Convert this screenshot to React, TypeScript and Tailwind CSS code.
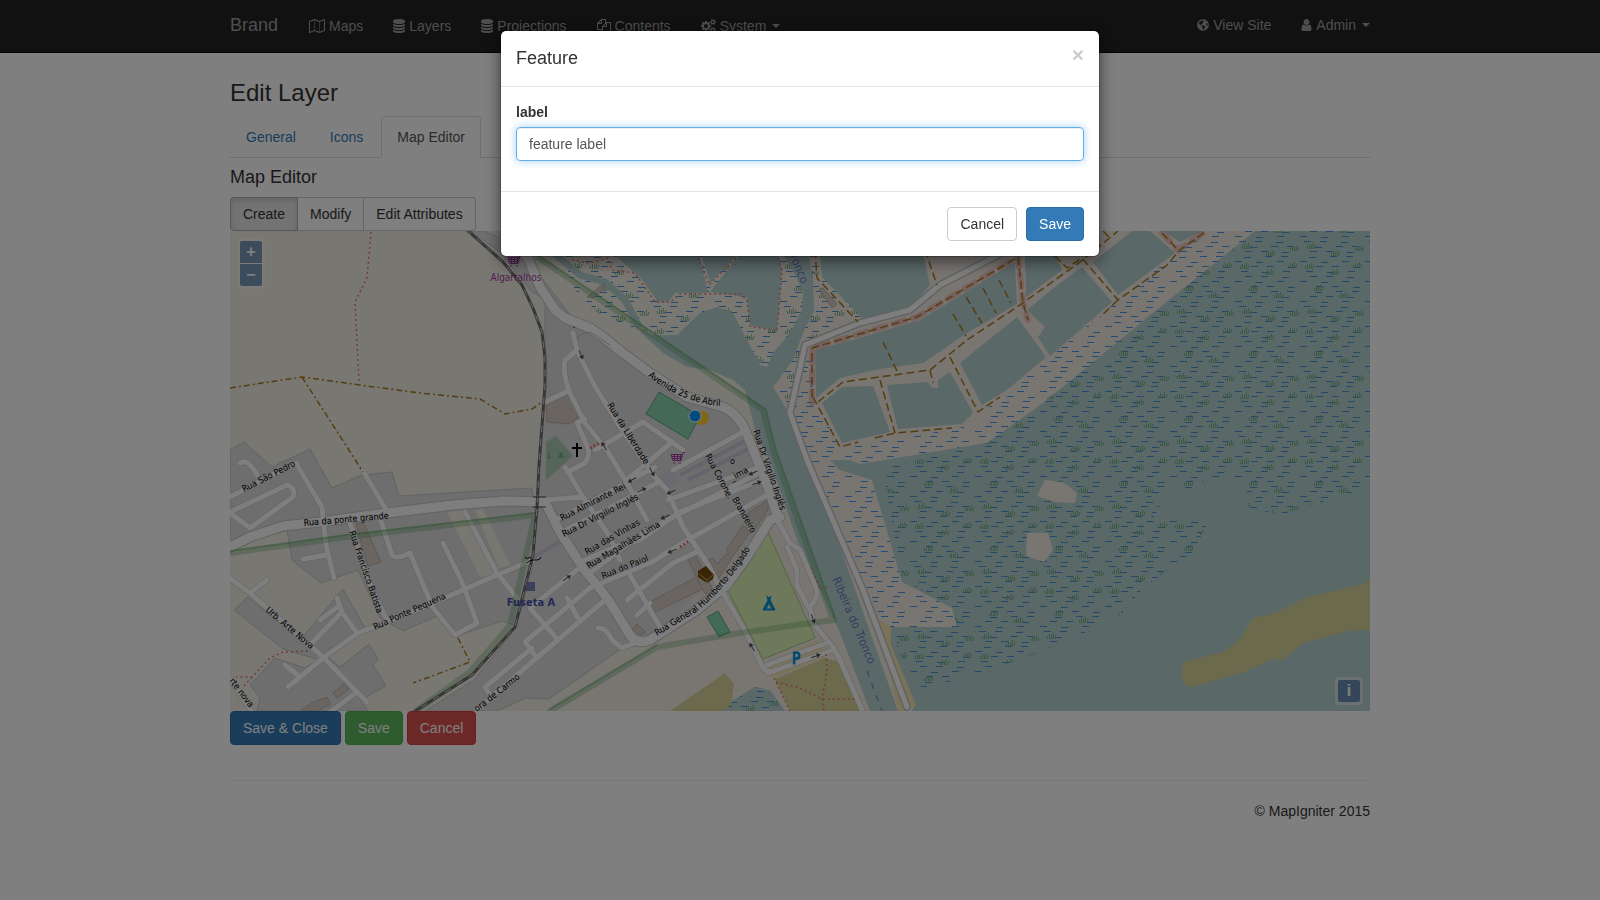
import React from 'react';
import { FaGlobeAmericas } from 'react-icons/fa';

interface IconProps {
  viewBox: string;
  d: string;
  className: string;
}

const Icon: React.FC<IconProps> = ({ viewBox, d, className }) => (
  <svg viewBox={viewBox} className={className} fill="currentColor" aria-hidden="true">
    <path d={d} />
  </svg>
);

const MAP_PATH = 'M2020 11q28 20 28 53v1408q0 20-11 36t-29 23l-640 256q-24 11-48 0l-616-246-616 246q-10 5-24 5-19 0-36-11-28-20-28-53V320q0-20 11-36t29-23L680 5q24-11 48 0l616 246L1960 5q32-13 60 6zM736 146v1270l576 230V376zM128 363v1270l544-217V146zm1792 1066V159l-544 217v1270z';
const DATABASE_PATH = 'M768 768q237 0 443-43t325-127v170q0 69-103 128t-280 93.5-385 34.5-385-34.5-280-93.5-103-128v-170q119 84 325 127t443 43zm0 768q237 0 443-43t325-127v170q0 69-103 128t-280 93.5-385 34.5-385-34.5-280-93.5-103-128v-170q119 84 325 127t443 43zm0-384q237 0 443-43t325-127v170q0 69-103 128t-280 93.5-385 34.5-385-34.5-280-93.5-103-128v-170q119 84 325 127t443 43zm0-1152q208 0 385 34.5t280 93.5 103 128v128q0 69-103 128t-280 93.5-385 34.5-385-34.5-280-93.5-103-128v-128q0-69 103-128t280-93.5 385-34.5z';
const FILES_PATH = 'M1696 384q40 0 68 28t28 68v1216q0 40-28 68t-68 28h-960q-40 0-68-28t-28-68v-288h-544q-40 0-68-28t-28-68v-672q0-40 20-88t48-76l408-408q28-28 76-48t88-20h416q40 0 68 28t28 68v328q68-40 128-40h416zm-544 213l-299 299h299v-299zm-640-384l-299 299h299v-299zm196 647l316-316v-416h-384v416q0 40-28 68t-68 28h-416v640h512v-256q0-40 20-88t48-76zm956 804v-1152h-384v416q0 40-28 68t-68 28h-416v640h896z';
const COGS_PATH = 'M896 896q0-106-75-181t-181-75-181 75-75 181 75 181 181 75 181-75 75-181zm768 512q0-52-38-90t-90-38-90 38-38 90q0 53 37.5 90.5t90.5 37.5 90.5-37.5 37.5-90.5zm0-1024q0-52-38-90t-90-38-90 38-38 90q0 53 37.5 90.5t90.5 37.5 90.5-37.5 37.5-90.5zm-384 421v185q0 10-7 19.5t-16 10.5l-155 24q-11 35-32 76 34 48 90 115 7 11 7 20 0 12-7 19-23 30-82.5 89.5t-78.5 59.5q-11 0-21-7l-115-90q-37 19-77 31-11 108-23 155-7 24-30 24h-186q-11 0-20-7.5t-10-17.5l-23-153q-34-10-75-31l-118 89q-7 7-20 7-11 0-21-8-144-133-144-160 0-9 7-19 10-14 41-53t47-61q-23-44-35-82l-152-24q-10-1-17-9.5t-7-19.5v-185q0-10 7-19.5t16-10.5l155-24q11-35 32-76-34-48-90-115-7-11-7-20 0-12 7-20 22-30 82-89t79-59q11 0 21 7l115 90q34-18 77-32 11-108 23-154 7-24 30-24h186q11 0 20 7.5t10 17.5l23 153q34 10 75 31l118-89q8-7 20-7 11 0 21 8 144 133 144 160 0 8-7 19-12 16-42 54t-45 60q23 48 34 82l152 23q10 2 17 10.5t7 19.5zm640 533v140q0 16-149 31-12 27-30 52 51 113 51 138 0 4-4 7-122 71-124 71-8 0-46-47t-52-68q-20 2-30 2t-30-2q-14 21-52 68t-46 47q-2 0-124-71-4-3-4-7 0-25 51-138-18-25-30-52-149-15-149-31v-140q0-16 149-31 13-29 30-52-51-113-51-138 0-4 4-7 4-2 35-20t59-34 30-16q8 0 46 46.5t52 67.5q20-2 30-2t30 2q51-71 92-112l6-2q4 0 124 70 4 3 4 7 0 25-51 138 17 23 30 52 149 15 149 31zm0-1024v140q0 16-149 31-12 27-30 52 51 113 51 138 0 4-4 7-122 71-124 71-8 0-46-47t-52-68q-20 2-30 2t-30-2q-14 21-52 68t-46 47q-2 0-124-71-4-3-4-7 0-25 51-138-18-25-30-52-149-15-149-31v-140q0-16 149-31 13-29 30-52-51-113-51-138 0-4 4-7 4-2 35-20t59-34 30-16q8 0 46 46.5t52 67.5q20-2 30-2t30 2q51-71 92-112l6-2q4 0 124 70 4 3 4 7 0 25-51 138 17 23 30 52 149 15 149 31z';
const USER_PATH = 'M1536 1399q0 109-62.5 187t-150.5 78h-854q-88 0-150.5-78t-62.5-187q0-85 8.5-160.5t31.5-152 58.5-131 94-89 134.5-34.5q131 128 313 128t313-128q76 0 134.5 34.5t94 89 58.5 131 31.5 152 8.5 160.5zm-256-887q0 159-112.5 271.5t-271.5 112.5-271.5-112.5-112.5-271.5 112.5-271.5 271.5-112.5 271.5 112.5 112.5 271.5z';

const Caret = () => (
  <span className="ml-0.5 size-0 border-x-4 border-t-4 border-x-transparent border-t-current" />
);

const Navbar = () => (
  <nav className="border-b border-[#080808] bg-[#222] text-[#9d9d9d]">
    <div className="mx-auto flex max-w-[1140px] items-start justify-between">
      <div className="flex items-start">
        <a href="#brand" className="py-[15px] pr-4 text-lg leading-5">Brand</a>
        <ul className="flex">
          <li>
            <a href="#maps" className="flex items-center gap-1 px-[15px] py-4">
              <Icon viewBox="0 0 2048 1792" d={MAP_PATH} className="h-3.5 w-4" />
              Maps
            </a>
          </li>
          <li>
            <a href="#layers" className="flex items-center gap-1 px-[15px] py-4">
              <Icon viewBox="0 0 1536 1792" d={DATABASE_PATH} className="h-3.5 w-3" />
              Layers
            </a>
          </li>
          <li>
            <a href="#projections" className="flex items-center gap-1 px-[15px] py-4">
              <Icon viewBox="0 0 1536 1792" d={DATABASE_PATH} className="h-3.5 w-3" />
              Projections
            </a>
          </li>
          <li>
            <a href="#contents" className="flex items-center gap-1 px-[15px] py-4">
              <Icon viewBox="0 0 1792 1792" d={FILES_PATH} className="size-3.5" />
              Contents
            </a>
          </li>
          <li>
            <a href="#system" className="flex items-center gap-1 px-[15px] py-4">
              <Icon viewBox="0 0 1920 1792" d={COGS_PATH} className="h-3.5 w-[15px]" />
              System
              <Caret />
            </a>
          </li>
        </ul>
      </div>
      <ul className="flex">
        <li>
          <a href="#site" className="flex items-center gap-1 px-[15px] py-[15px]">
            <FaGlobeAmericas className="size-3" />
            View Site
          </a>
        </li>
        <li>
          <a href="#admin" className="flex items-center gap-1 py-[15px] pl-[15px]">
            <Icon viewBox="256 128 1280 1536" d={USER_PATH} className="h-3 w-[11px]" />
            Admin
            <Caret />
          </a>
        </li>
      </ul>
    </div>
  </nav>
);

// marsh hatching, one 65x65 tile
const MARSH_DASHES = Array.from({ length: 13 }, (_, row) =>
  [0, 1, 2].map(i => `M${(row * 28 + i * 21 + (row % 3) * 4) % 58} ${row * 5 + 1.5 + (i % 2)}h7`).join('')
).join('');

const TUFT = 'm-3 -3l1 3m1.5 -5v5m2 -4v4m2 -6l-.5 6m3 -4l-1.5 4';
const TUFTS = [[8, 9], [33, 15], [56, 8], [17, 31], [42, 38], [58, 56], [10, 54], [34, 61]]
  .map(([x, y]) => `M${x} ${y}${TUFT}`).join('');

const ROADS = [
  'M573 333L577 350 593 383 620 427 655 477 667 490 683 527 707 563 723 593 743 627 761 664Q765 674 774 671',
  'M577 350L565 360Q562 373 570 393L585 423 607 450 627 483 647 520',
  'M585 419L577 423 588 448Q590 456 585 463L568 472',
  'M565 467L583 497 610 537 620 560',
  'M595 450L643 422 683 450M672 442L627 480',
  'M545 402L568 391',
  'M743 432L673 470',
  'M757 468L668 500M655 467L613 490 556 520M657 483L560 533',
  'M762 480L680 512 640 540 620 545 580 562',
  'M767 495L693 537 650 563 590 588',
  'M757 474L673 517 640 535 590 573',
  'M583 497L545 500',
  'M697 552L673 563 627 600M630 575L660 627M637 615L650 603',
  'M577 570L530 608 558 640',
  'M590 588L525 642 537 658',
  'M605 600L540 655 477 710',
  'M532 648L485 687 490 695M567 598L578 618',
  'M598 628Q606 627 612 640L622 648 635 643',
  'M777 520L790 543 800 550 817 590Q818 598 810 607L813 623 833 647 840 660 863 712',
  'M787 547L797 570 797 585 808 607',
  'M829 642L767 665M833 650L768 673',
  'M297 465L322 507 326 545 334 578M303 559L327 555',
  'M363 471L387 511',
  'M380 518L392 555Q396 560 410 553L433 608 455 635 477 623 462 582 443 543',
  'M350 523L372 590 387 620',
  'M465 512L497 573 517 598',
  'M300 677L323 658 358 633 387 622 433 603 497 575 533 560',
  'M228 577L250 593 323 657 367 702M250 593L267 580',
  'M310 645L342 612 337 598M342 612L357 633M320 620L339 606',
  'M285 665L300 677 288 687',
  'M330 712L357 692',
  'M228 676L252 712',
  'M228 498L270 476 297 463',
  'M240 463Q248 458 257 475',
  'M228 513L287 485Q296 488 293 497L250 528 230 513',
];

const MAIN_ROADS = [
  'M228 548L250 537 283 526 320 522 387 513 453 505 503 501 545 502 560 532 583 568 607 598 627 630Q634 646 650 640L697 610 727 585 747 557 770 520 780 517',
  'M498 225L528 258 540 287 555 310 565 318 590 328 603 337 623 353 650 373 687 397 723 407Q740 414 748 437L760 467 767 485 778 517',
];

const DIKE = 'M907 707L863 590 807 460 790 413 805 345 860 323 910 310 940 285 1000 254';

const WATER = [
  // creek and river
  '635,327 653,335 677,335 700,313 717,307 733,313 747,340 760,365 767,367 773,353 790,333 802,310 803,293 793,270 780,250 808,250 813,280 814,310 803,333 793,360 773,387 787,410 800,445 820,490 898,711 870,711 840,633 797,540 770,460 757,437 750,410 745,390 733,380 710,370 687,367 663,353',
  // fish ponds
  '610,250 698,250 708,293 675,293 668,302 658,302 640,277 627,266',
  '700,250 742,250 710,283',
  '743,250 777,250 782,270 777,331 750,325 747,297 710,292',
  '820,250 922,250 930,285 912,305 880,315 862,318 822,277',
  '815,350 863,337 920,320 953,300 1015,262 1017,304 967,333 923,363 880,369 840,378 816,398',
  '822,403 842,387 873,386 890,432 842,443',
  '887,385 928,382 932,388 938,388 938,380 950,372 973,413 962,424 898,429',
  '960,363 1017,317 1046,357 1007,390 982,405',
  '1027,310 1060,283 1082,267 1112,302 1050,356 1038,337 1045,327',
  '1093,262 1132,231 1150,231 1175,253 1118,295',
  '1163,231 1203,231 1180,242',
  '1025,250 1053,250 1062,270 1026,297',
  // lagoon
  '1255,231 1160,307 1080,373 1040,405 987,443 860,464 850,460 830,460 840,470 872,480 902,582 952,608 957,627 891,627 891,645 915,705 912,711 1370,711 1370,231',
];

const RESIDENTIAL = [
  '545,300 545,380 542,430 536,520 532,570 516,628 474,680 425,711 497,711 526,698 549,699 622,648 645,645 752,562 777,505 765,470 750,430 735,412 700,403 645,365 600,330 570,315 530,262 500,238 484,231 470,231 500,252 530,290',
  '230,450 244,442 272,467 310,449 332,488 362,475 392,472 399,496 532,488 536,520 532,560 514,625 502,621 457,636 437,616 403,631 380,618 358,570 321,583 292,560 287,530 230,546',
  '234,610 248,597 300,640 343,589 365,628 330,650 320,660 283,649',
  '275,658 250,685 260,698 257,711 368,711 360,700 386,686 373,665 378,659 369,644 340,667 325,655 305,668',
];

const BUILDINGS = [
  '546,405 570,392 582,415 568,424 547,422',
  '648,603 700,575 707,587 655,612',
  '687,558 695,554 713,590 705,594',
  '708,560 713,558 717,564 727,553 732,558 718,580',
  '726,550 743,525 750,532 733,556',
  '748,513 768,500 768,510 753,532',
  '632,630 637,624 646,632 637,637',
  '356,524 363,522 381,562 368,566',
  '333,693 345,683 349,689 337,698',
  '300,711 312,703 327,697 330,704 318,711',
  '587,297 597,289 604,283 604,289 593,298',
  '819,289 823,288 837,304 832,308',
];

const WEST_TRACKS = [
  'M230 388L302 377 360 385 420 393 480 399 505 414 532 409 542 402M302 377L363 472',
  'M458 638L470 662 413 683',
];

const EAST_TRACKS = [
  'M812 397V348L917 317 1018 257 1023 303 1028 320',
  'M813 397L840 447 858 442M818 402L843 382 930 370 967 340 1020 305 1080 262 1118 231',
  'M880 380L895 433M875 438L895 433 952 428M950 357L978 412 1000 397',
  'M883 342L898 373M953 314L966 336M966 297L982 323M983 288L996 313M999 280L1011 303M930 370L933 383',
  'M815 250L817 278 858 322M925 250L937 285',
  'M1055 256L1067 268 1082 258 1118 300 1167 265 1180 250 1205 232M1118 300L1100 317M1162 233L1178 250M1103 231L1110 238',
];

const FOOTPATHS = [
  'M371 232L367 278 355 302 359 382',
  'M308 651L283 652 270 658 252 677 236 677M252 677L242 688',
  'M572 260L590 263 608 258 612 270 635 273 655 302 670 302 680 294 740 294 747 300 750 326 777 331 782 270 778 258M698 258L709 285 736 258',
  'M774 678L790 711M776 682L800 688 822 699 855 699M826 654L827 672 822 699 824 711M811 567L820 589 827 587',
];

const LABELS: [string, number, number, number][] = [
  ['Rua São Pedro', 244, 492, -27],
  ['Rua da ponte grande', 304, 526, -5],
  ['Rua Francisco Batista', 349, 532, 71],
  ['Rua Ponte Pequena', 375, 630, -24],
  ['Urb. Arte Nova', 265, 611, 40],
  ['rte nova', 229, 681, 53],
  ['ora de Carmo', 477, 712, -38],
  ['Rua da Liberdade', 607, 405, 58],
  ['Rua Dr Virgilio Inglés', 753, 431, 71],
  ['Rua Corone.', 705, 456, 62],
  ['Brandeiro', 732, 499, 61],
  ['o', 730, 464, 0],
  ['_ima', 732, 481, -28],
  ['Rua Almirante Rei', 562, 521, -27],
  ['Rua Dr Virgilio Inglés', 564, 537, -27],
  ['Rua das Vinhas', 587, 555, -30],
  ['Rua Magalhães Lima', 589, 569, -31],
  ['Rua do Paiol', 603, 579, -22],
];

// one-way arrows: x, y, heading
const ARROWS: [number, number, number][] = [
  [581, 355, 65], [604, 446, -120], [652, 472, 62], [632, 480, 150], [642, 490, -25],
  [671, 492, 155], [665, 517, 155], [753, 473, 155], [757, 483, -20], [672, 551, 155],
  [567, 578, -35], [813, 619, 70], [752, 647, -120], [816, 656, -20],
];

const CART = 'M7 -6.5h-2l-2 8h-8l-2 -6h11M-6 -2.5h10M-5 -.5h9M-3.5 -4v5M-.5 -4v5M2.5 -4v5M-5 4h2M1 4h2';

const RAIL = 'M466 229L503 262 522 285 533 308 542 332 545 358V385L542 425 539 465 537 508 533 555 515 627 472 675 412 713';

const MapCanvas = () => (
  <svg
    viewBox="230 231 1140 480"
    preserveAspectRatio="xMidYMid slice"
    className="block size-full bg-[#f2eee4]"
    role="img"
    aria-label="Street map of Fuseta"
  >
    <defs>
      <pattern id="mud" width="65" height="65" patternUnits="userSpaceOnUse">
        <path d={MARSH_DASHES} stroke="#4596ea" strokeWidth="1" />
      </pattern>
      <pattern id="marsh" width="65" height="65" patternUnits="userSpaceOnUse">
        <path d={MARSH_DASHES} stroke="#4a92d4" strokeWidth="1" />
        <path d={TUFTS} stroke="#66a877" strokeWidth="1" fill="none" opacity="0.8" />
      </pattern>
      <path id="avenida" d="M648 376Q665 390 686 398T726 406" />
      <path id="delgado" d="M657 636L696 612Q726 589 756 540" />
    </defs>

    {/* ground */}
    <path d="M780 231H1260L987 443 860 464 957 627 880 640 800 480 790 413 770 380z" fill="#f2eae3" />
    <g fill="#dcdcdc" stroke="#c4c4c4" strokeWidth="1">
      {RESIDENTIAL.map(points => <polygon key={points} points={points} />)}
    </g>
    <path d="M447 512L465 510 495 575 480 577zM475 510L483 509 510 565 499 568z" fill="#f2eee4" />
    <path d="M770 520L783 517 797 540 870 711 725 711 640 711 550 705 645 648z" fill="#f2eae3" opacity="0.6" />

    {/* marsh and water */}
    <path d="M560 250L820 250 862 320 808 343 792 412 770 400 735 380 690 365 640 330 600 315 575 290z" fill="url(#marsh)" />
    <path d="M770 385L790 345 860 325 812 348 813 400 842 448 960 428 1005 395 1118 300 1205 231 1256 231 1080 373 987 443 860 464 830 460 872 480 902 582 952 608 957 627 885 627 807 460 790 412z" fill="url(#mud)" />
    <path d="M550 250L580 275 605 282 625 300 640 328" fill="none" stroke="#b5d0d0" strokeWidth="7" />
    <g fill="#b5d0d0">
      {WATER.map(points => <polygon key={points} points={points} />)}
      <polygon points="715,711 755,687 770,690 785,711" />
    </g>
    <path d="M718 711L755 687 770 690 785 711z" fill="url(#marsh)" />
    <path d="M1255 231H1370V487L1280 515 1247 507V480L1210 478 1187 490 1150 495 1160 507 1153 518H1210L1193 552 1143 588 1120 615 1080 635 1020 660 923 690 897 650V630L957 627 952 606 903 580 890 513 883 468 987 443 1060 389z" fill="url(#marsh)" />
    <path d="M1045 480L1063 482 1077 493 1075 503 1055 502 1037 496zM1027 533H1048L1053 550 1044 562 1026 556z" fill="#f2eae3" />
    <path d="M1183 662L1223 652 1240 639 1253 618 1273 614 1305 598 1363 584 1370 579V630L1348 631 1303 643 1283 660 1273 659 1245 672 1188 688 1181 679z" fill="#d6d599" />
    <path d="M877 619L891 627V645L916 705 908 711H898z" fill="#f4e4b0" />

    {/* land use */}
    <path d="M768 532L815 638 763 659 727 589z" fill="#dcf3b6" stroke="#a4cc80" />
    <path d="M818 640L826 657 773 678 768 662z" fill="#f4e9b0" />
    <path d="M775 679L825 658 840 662 862 711H790zM670 711L725 673 734 684 731 705 722 711z" fill="#d6d599" />
    <path d="M659 392L700 416 688 439 646 414zM707 617L718 611 730 632 719 637z" fill="#8ad3af" stroke="#5aa985" />
    <path d="M546 442L556 436 573 456 546 480z" fill="#aacbaf" />
    <path d="M561 451l-3 7h6zM548 452v7h3z" fill="#7dab85" />
    <path d="M658 477L673 470 678 483 665 492z" fill="#d5d4e0" />
    <g fill="#d5cac0" stroke="#bdb0a6">
      {BUILDINGS.map(points => <polygon key={points} points={points} />)}
    </g>
    <path d="M680 475L745 441M688 480L748 449M533 558L562 540" stroke="#c9c9d8" strokeWidth="4" />

    {/* roads: casing first, then fill */}
    <g fill="none" strokeLinejoin="round" strokeLinecap="round">
      <g stroke="#c4c4c4">
        {ROADS.map(d => <path key={d} d={d} strokeWidth="6" />)}
        {MAIN_ROADS.map(d => <path key={d} d={d} strokeWidth="11" />)}
        <path d={DIKE} strokeWidth="8" />
      </g>
      <g stroke="#fdfdfd">
        {ROADS.map(d => <path key={d} d={d} strokeWidth="5" />)}
        {MAIN_ROADS.map(d => <path key={d} d={d} strokeWidth="9" />)}
        <path d={DIKE} strokeWidth="5" />
      </g>
      <path d="M577 340Q580 331 592 333L610 345" stroke="#bcbcbc" />
      <path d="M590 448L600 443M680 547L689 541" stroke="#e8786f" strokeWidth="3" strokeDasharray="2 2" strokeLinecap="butt" />
    </g>
    <circle cx="574" cy="327" r="1" fill="#777" />

    {/* park boundary */}
    <g fill="none" stroke="#4fa057">
      <path d="M230 553L347 537 535 515 510 625 470 672 416 711M536 256L633 322 763 410 773 450 833 620 740 633 657 647 550 711" strokeWidth="6" opacity="0.3" />
      <path d="M230 551L347 535 536 513M536 254L634 320 766 410 776 450 836 620M657 645L547 711" strokeWidth="2" opacity="0.35" />
    </g>

    {/* railway */}
    <g fill="none">
      <path d={RAIL} stroke="#6c6c6c" strokeWidth="3" />
      <path d={RAIL} stroke="#d8d8d8" strokeWidth="1" strokeDasharray="7 7" />
      <path d="M533 497h13M533 507h13" stroke="#555" />
      <path d="M527 563q2 -3 6 -3h4q3 0 4 -3M531 557q-4 3 -6 0" stroke="#111" />
    </g>

    {/* tracks and paths */}
    <g fill="none">
      <path d="M812 403V348L917 317 1018 257 1023 303 1028 320M1162 233L1178 250 1205 232" stroke="#e69b96" strokeWidth="6" strokeDasharray="12 8" strokeLinecap="round" opacity="0.5" />
      <g stroke="#a87c20">
        {WEST_TRACKS.map(d => <path key={d} d={d} strokeWidth="1.5" strokeDasharray="6 3 2 3" />)}
        {EAST_TRACKS.map(d => <path key={d} d={d} strokeWidth="1.5" strokeDasharray="8 4" />)}
      </g>
      <g stroke="#e8786f" strokeWidth="1.5" strokeDasharray="2 3">
        {FOOTPATHS.map(d => <path key={d} d={d} />)}
      </g>
      <path d="M867 671L882 711" stroke="#6673c4" strokeWidth="1" strokeDasharray="6 7" />
    </g>

    {ARROWS.map(([x, y, heading]) => (
      <path key={`${x}-${y}`} transform={`translate(${x} ${y}) rotate(${heading})`} d="M-5 -0.5H1V-2.5L5 0 1 2.5V0.5H-5z" fill="#4f4f4f" />
    ))}

    {/* labels */}
    <g
      className="font-['DejaVu_Sans_Condensed','DejaVu_Sans',sans-serif] text-[9px]"
      fill="#000"
      stroke="#ededed"
      strokeWidth="1"
      paintOrder="stroke"
    >
      {LABELS.map(([text, x, y, angle]) => (
        <text key={`${text}-${x}`} transform={`translate(${x} ${y}) rotate(${angle})`}>{text}</text>
      ))}
      <text><textPath href="#avenida">Avenida 25 de Abril</textPath></text>
      <text><textPath href="#delgado">Rua General Humberto Delgado</textPath></text>
    </g>
    <g
      className="font-['DejaVu_Sans_Condensed','DejaVu_Sans',sans-serif] text-[12px]"
      fill="#647bb8"
      stroke="#c4d6dc"
      strokeWidth="1"
      paintOrder="stroke"
    >
      <text transform="translate(832 579) rotate(67)">Ribeira do Tronco</text>
      <text transform="translate(788 252) rotate(68)">Tronco</text>
    </g>
    <g className="font-['DejaVu_Sans_Condensed','DejaVu_Sans',sans-serif] text-[10px]" textAnchor="middle">
      <text x="516" y="281" fill="#a23ba0">Algartalhos</text>
      <text x="531" y="606" fill="#4a4fa8" className="text-[11px] font-bold">Fuseta A</text>
      <text x="796" y="664" fill="#0092da" stroke="#0092da" className="text-[15px]">P</text>
    </g>

    {/* points of interest */}
    <path d="M526 582h9v9h-9z" fill="#7a7ab8" />
    <path d="M577 443v14M572 448h10" stroke="#000" strokeWidth="2" />
    <g fill="none" stroke="#a23ba0">
      <path transform="translate(515 262)" d={CART} />
      <path transform="translate(678 459)" d={CART} />
    </g>
    <path d="M767 596l2 2 2 -2 -1 4 5 10h-12l5 -10zM769 603l-3 6h6z" fill="#0092da" stroke="#0092da" fillRule="evenodd" />
    <path d="M698 571l8 -5 8 9 -1 4 -6 4 -9 -6z" fill="#734a08" />
    <path d="M699 574l8 6 6 -5M707 580v3" fill="none" stroke="#c9a568" />
    <circle cx="702" cy="418" r="7" fill="#ffcc33" />
    <circle cx="695" cy="416" r="6" fill="#0099ff" stroke="#fff" strokeWidth="1" />
  </svg>
);

const mapControl = 'flex size-[22px] items-center justify-center bg-[#003c88]/50 text-base font-bold leading-none text-white';

const MapView = () => (
  <div className="relative h-[480px] overflow-hidden">
    <MapCanvas />
    <div className="absolute left-[7px] top-[7px] flex flex-col gap-px rounded bg-white/40 p-[3px]">
      <button type="button" aria-label="Zoom in" className={`${mapControl} rounded-t-xs`}>+</button>
      <button type="button" aria-label="Zoom out" className={`${mapControl} rounded-b-xs`}>−</button>
    </div>
    <div className="absolute bottom-1.5 right-[7px] rounded bg-white/40 p-[3px]">
      <button type="button" aria-label="Attributions" className={`${mapControl} rounded-xs`}>i</button>
    </div>
  </div>
);

const btn = 'rounded border px-3 py-1.5 leading-5';

const FeatureModal = () => (
  <div className="fixed inset-0 bg-black/50">
    <div
      role="dialog"
      aria-modal="true"
      aria-labelledby="feature-title"
      className="mx-auto mt-[30px] max-w-[600px] rounded-md border border-black/20 bg-white bg-clip-padding shadow-[0_5px_15px_rgba(0,0,0,0.5)]"
    >
      <div className="flex items-start justify-between border-b border-[#e5e5e5] p-[15px]">
        <h4 id="feature-title" className="text-lg leading-[25px]">Feature</h4>
        <button type="button" aria-label="Close" className="text-[21px] font-bold leading-[18px] text-black opacity-20">×</button>
      </div>
      <form className="px-[15px] pb-[30px] pt-[15px]">
        <label htmlFor="feature-label" className="mb-[5px] block font-bold">label</label>
        <input
          id="feature-label"
          type="text"
          defaultValue="feature label"
          className="block h-[34px] w-full rounded border border-[#66afe9] px-3 py-1.5 text-[#555] shadow-[inset_0_1px_1px_rgba(0,0,0,0.075),0_0_8px_rgba(102,175,233,0.6)] outline-none"
        />
      </form>
      <div className="flex justify-end gap-[9px] border-t border-[#e5e5e5] p-[15px]">
        <button type="button" className={`${btn} border-[#ccc] bg-white`}>Cancel</button>
        <button type="button" className={`${btn} border-[#2e6da4] bg-[#337ab7] text-white`}>Save</button>
      </div>
    </div>
  </div>
);

const App: React.FC = () => (
  <div className="min-h-screen bg-white font-['Liberation_Sans',Arial,sans-serif] text-sm leading-5 text-[#333]">
    <Navbar />
    <main className="mx-auto max-w-[1140px] pt-[27px]">
      <h3 className="mb-2.5 text-2xl leading-[26px]">Edit Layer</h3>
      <ul className="flex border-b border-[#ddd]">
        <li className="mr-0.5"><a href="#general" className="block px-4 pb-2.5 pt-[11px] text-[#337ab7]">General</a></li>
        <li className="mr-0.5"><a href="#icons" className="block px-4 pb-2.5 pt-[11px] text-[#337ab7]">Icons</a></li>
        <li className="-mb-px">
          <a href="#editor" aria-current="page" className="block rounded-t border border-[#ddd] border-b-white bg-white px-[15px] py-2.5 text-[#555]">Map Editor</a>
        </li>
      </ul>
      <h4 className="my-2.5 text-lg leading-[19px]">Map Editor</h4>
      <div className="flex">
        <button type="button" aria-pressed="true" className="rounded-l border border-[#adadad] bg-[#e6e6e6] px-3 py-1.5 shadow-[inset_0_3px_5px_rgba(0,0,0,0.125)]">Create</button>
        <button type="button" className="border-y border-r border-[#ccc] px-3 py-1.5">Modify</button>
        <button type="button" className="rounded-r border-y border-r border-[#ccc] px-3 py-1.5">Edit Attributes</button>
      </div>
      <MapView />
      <div className="flex gap-1">
        <button type="button" className={`${btn} border-[#2e6da4] bg-[#337ab7] text-white`}>Save &amp; Close</button>
        <button type="button" className={`${btn} border-[#4cae4c] bg-[#5cb85c] text-white`}>Save</button>
        <button type="button" className={`${btn} border-[#d43f3a] bg-[#d9534f] text-white`}>Cancel</button>
      </div>
      <footer className="mt-[35px] border-t border-[#eee] pt-5 text-right">© MapIgniter 2015</footer>
    </main>
    <FeatureModal />
  </div>
);

export default App;
